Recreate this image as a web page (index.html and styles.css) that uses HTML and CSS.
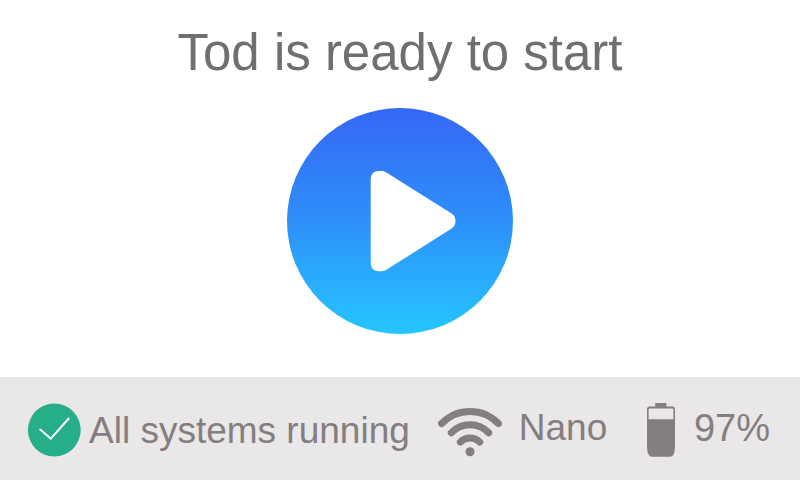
FILE: index.html
```html
<!DOCTYPE html>
<html lang="en">
<head>
  <meta charset="utf-8">
  <meta name="viewport" content="width=device-width, initial-scale=1">
  <title>Tod</title>
  <link rel="stylesheet" href="styles.css">
</head>
<body>
  <main class="stage">
    <h1 class="title">Tod is ready to start</h1>
    <button class="play" type="button" aria-label="Start">
      <svg class="play-icon" viewBox="0 0 226 226" aria-hidden="true">
        <path fill="#fff" d="M83.700 72C83.700 66 86.500 63 92 63H94.500C97 63 98 63.600 99.800 64.700L164.200 105.300C167.200 107.200 168.500 109.800 168.500 113C168.500 116.300 167.200 118.900 164.200 120.800L99.800 161.600C98 162.700 97 163.200 94.500 163.200H92C86.500 163.200 83.700 160.300 83.700 154.300Z"/>
      </svg>
    </button>
  </main>
  <footer class="bar">
    <div class="item systems">
      <svg class="check" viewBox="0 0 54 54" aria-hidden="true">
        <circle cx="27.300" cy="27" r="26.400" fill="#26ae88"/>
        <path d="M13.200 26.500L23.800 35.700L41.700 15.500" fill="none" stroke="#fff" stroke-width="2" stroke-linecap="round" stroke-linejoin="round"/>
      </svg>
      <span class="text">All systems running</span>
    </div>
    <div class="item network">
      <svg class="wifi" viewBox="0 0 64 50" aria-hidden="true">
        <g fill="none" stroke="#857e7e" stroke-width="7" stroke-linecap="round">
          <path d="M3.600 16.500A39.400 39.400 0 0 1 60.400 16.500"/>
          <path d="M13.300 25.800A26 26 0 0 1 50.700 25.800"/>
          <path d="M22.300 35A14 14 0 0 1 41.700 35"/>
        </g>
        <circle cx="32" cy="44.700" r="4.500" fill="#857e7e"/>
      </svg>
      <span class="text">Nano</span>
    </div>
    <div class="item power">
      <svg class="battery" viewBox="0 0 28 54" aria-hidden="true">
        <path fill="#857e7e" fill-rule="evenodd" d="M8.200 0H19.400V3.600H25.500Q28 3.600 28 6.500V42Q28 49 26.500 51.500Q25.500 53.700 23 53.700H5Q2.500 53.700 1.500 51.500Q0 49 0 42V6.500Q0 3.600 2.500 3.600H8.200ZM3 5.600Q1.600 5.600 1.600 7V16.300H26.400V7Q26.400 5.600 25 5.600Z"/>
      </svg>
      <span class="text">97%</span>
    </div>
  </footer>
</body>
</html>
```
FILE: styles.css
```css
* {
  box-sizing: border-box;
}

body {
  display: flex;
  flex-direction: column;
  min-height: 100vh;
  margin: 0;
  background: #fff;
  font-family: "Liberation Sans", Arial, sans-serif;
}

.stage {
  display: flex;
  flex: 1;
  flex-direction: column;
  align-items: center;
  gap: 26px;
  padding: 24px 24px 40px;
}

.title {
  margin: 0;
  color: #6f6f6f;
  font-size: 51px;
  font-weight: 400;
  line-height: 58px;
  text-align: center;
}

.play {
  width: 226px;
  height: 226px;
  padding: 0;
  border: 0;
  border-radius: 50%;
  background: linear-gradient(#3568f5, #2e8bf9 45%, #25c6ff);
  cursor: pointer;
}

.play-icon {
  display: block;
  width: 100%;
}

.bar {
  display: flex;
  align-items: flex-start;
  gap: 28px;
  padding: 26px 30px 21px 27px;
  background: #e9e7e8;
  color: #857e7e;
}

.item {
  display: flex;
  align-items: flex-start;
}

.text {
  font-size: 37px;
  line-height: 50px;
}

.systems {
  gap: 8px;
}

.systems .text {
  line-height: 56px;
}

.network {
  gap: 17px;
}

.power {
  gap: 19px;
  margin-left: auto;
}

.power .text {
  font-size: 38px;
}

.check {
  width: 54px;
}

.wifi {
  width: 64px;
  margin-top: 4px;
}

.battery {
  width: 28px;
}
```
